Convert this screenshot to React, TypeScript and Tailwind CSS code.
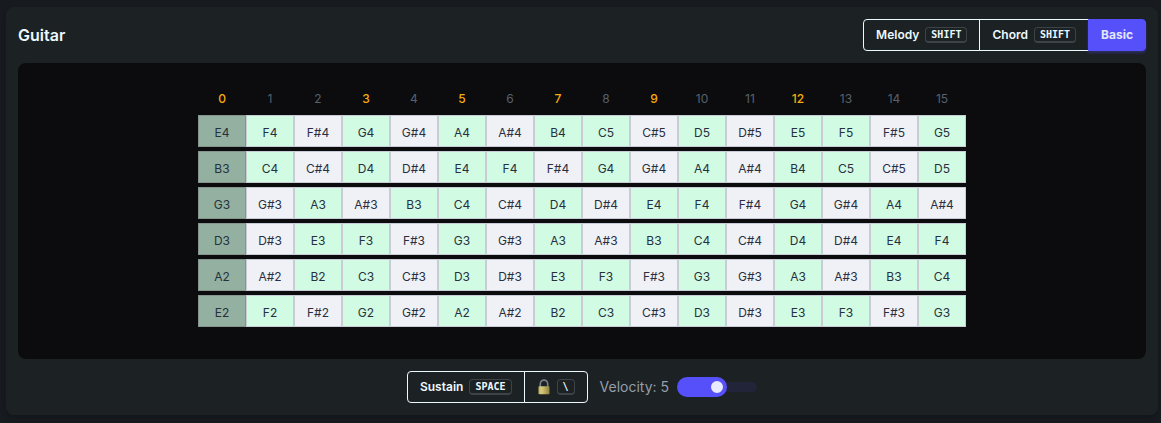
import { useState } from "react";
import type { ReactNode } from "react";

const NAMES = ["C", "C#", "D", "D#", "E", "F", "F#", "G", "G#", "A", "A#", "B"];
const OPEN_STRINGS = [64, 59, 55, 50, 45, 40];
const FRETS = Array.from({ length: 16 }, (_, i) => i);
const MARKED = [0, 3, 5, 7, 9, 12];

function noteName(midi: number) {
  return NAMES[midi % 12] + (Math.floor(midi / 12) - 1);
}

function cellColors(note: string, fret: number) {
  if (fret === 0) return "border-[#85948d] bg-[#94b0a1] text-[#25323a]";
  if (note.includes("#")) return "border-[#c8ccd4] bg-[#f0f1f6] text-[#28303f]";
  return "border-[#c8ccd4] bg-[#d1fbe3] text-[#28303f]";
}

function Key({ children }: { children: ReactNode }) {
  return (
    <kbd className="flex h-4 items-center rounded border border-b-2 border-[#3d4347] px-[5px] font-['DejaVu_Sans_Mono',monospace] text-[10px] leading-3 font-bold">
      {children}
    </kbd>
  );
}

function Padlock() {
  return (
    <svg width="14" height="16" viewBox="-1 0 14 16" aria-hidden="true">
      <defs>
        <linearGradient id="brass" x1="0" x2="1" y1="0" y2="0">
          <stop offset="0" stopColor="#c2b25f" />
          <stop offset="0.3" stopColor="#d6ca7c" />
          <stop offset="1" stopColor="#8f8038" />
        </linearGradient>
      </defs>
      <path d="M2.3 8V4.8a3.7 3.7 0 0 1 7.4 0V8" fill="none" stroke="#77838b" strokeWidth="1.6" />
      <rect x="0.5" y="7.3" width="11" height="8" rx="0.8" fill="url(#brass)" />
    </svg>
  );
}

const outlined =
  "-ml-px flex h-8 cursor-pointer items-center gap-1.5 border border-[#ecf9ff] px-3 text-xs font-semibold text-[#ecf9ff] first:ml-0 first:rounded-l last:rounded-r";

export default function App() {
  const [velocity, setVelocity] = useState(5);

  return (
    <div className="min-h-screen bg-[#171a1e] pt-[7px] pr-[3px] pb-2 pl-[6px] font-[Inter,sans-serif]">
      <section className="flex flex-col gap-3 rounded-lg bg-[#1c2124] p-3 shadow-md">
        <header className="flex items-center justify-between">
          <h2 className="text-base font-semibold text-[#ecf9ff]">Guitar</h2>
          <div className="flex">
            <button type="button" className={outlined}>
              Melody <Key>SHIFT</Key>
            </button>
            <button type="button" className={outlined}>
              Chord <Key>SHIFT</Key>
            </button>
            <button
              type="button"
              className="-ml-px flex h-8 cursor-pointer items-center rounded-r border border-[#5650fb] bg-[#5650fb] px-3 text-xs font-bold text-[#e4e7ff] shadow-[0_2px_3px_#5650fb4d]"
            >
              Basic
            </button>
          </div>
        </header>

        <div className="flex flex-col items-center overflow-x-auto rounded-lg bg-[#0c0c0e] pt-5 pb-8">
          <div className="grid grid-cols-[repeat(16,48px)]">
            {FRETS.map((fret) => (
              <div
                key={fret}
                className={`flex h-8 items-center justify-center text-xs ${
                  MARKED.includes(fret) ? "font-medium text-[#f9ab0b]" : "text-[#58616d]"
                }`}
              >
                {fret}
              </div>
            ))}
          </div>
          <div className="flex flex-col gap-1">
            {OPEN_STRINGS.map((open) => (
              <div key={open} className="grid grid-cols-[repeat(16,48px)]">
                {FRETS.map((fret) => {
                  const note = noteName(open + fret);
                  return (
                    <button
                      key={fret}
                      type="button"
                      className={`flex h-8 cursor-pointer items-center justify-center border pt-1 text-xs ${cellColors(note, fret)}`}
                    >
                      {note}
                    </button>
                  );
                })}
              </div>
            ))}
          </div>
        </div>

        <footer className="flex items-center justify-center gap-3">
          <div className="flex">
            <button type="button" className={outlined}>
              Sustain <Key>SPACE</Key>
            </button>
            <button type="button" className={outlined} aria-label="Lock sustain">
              <Padlock />
              <Key>\</Key>
            </button>
          </div>
          <div className="flex items-center gap-2">
            <label htmlFor="velocity" className="text-sm text-[#949eaa]">
              Velocity: {velocity}
            </label>
            <input
              id="velocity"
              type="range"
              min={1}
              max={9}
              value={velocity}
              onChange={(e) => setVelocity(Number(e.target.value))}
              className="h-5 w-20 cursor-pointer appearance-none overflow-hidden rounded-full bg-transparent [&::-webkit-slider-runnable-track]:h-[10px] [&::-webkit-slider-runnable-track]:rounded-full [&::-webkit-slider-runnable-track]:bg-[#22243a] [&::-webkit-slider-thumb]:-mt-[5px] [&::-webkit-slider-thumb]:size-5 [&::-webkit-slider-thumb]:appearance-none [&::-webkit-slider-thumb]:rounded-full [&::-webkit-slider-thumb]:border-4 [&::-webkit-slider-thumb]:border-[#5650fb] [&::-webkit-slider-thumb]:bg-[#e8ebff] [&::-webkit-slider-thumb]:shadow-[-60px_0_0_50px_#5650fb]"
            />
          </div>
        </footer>
      </section>
    </div>
  );
}
